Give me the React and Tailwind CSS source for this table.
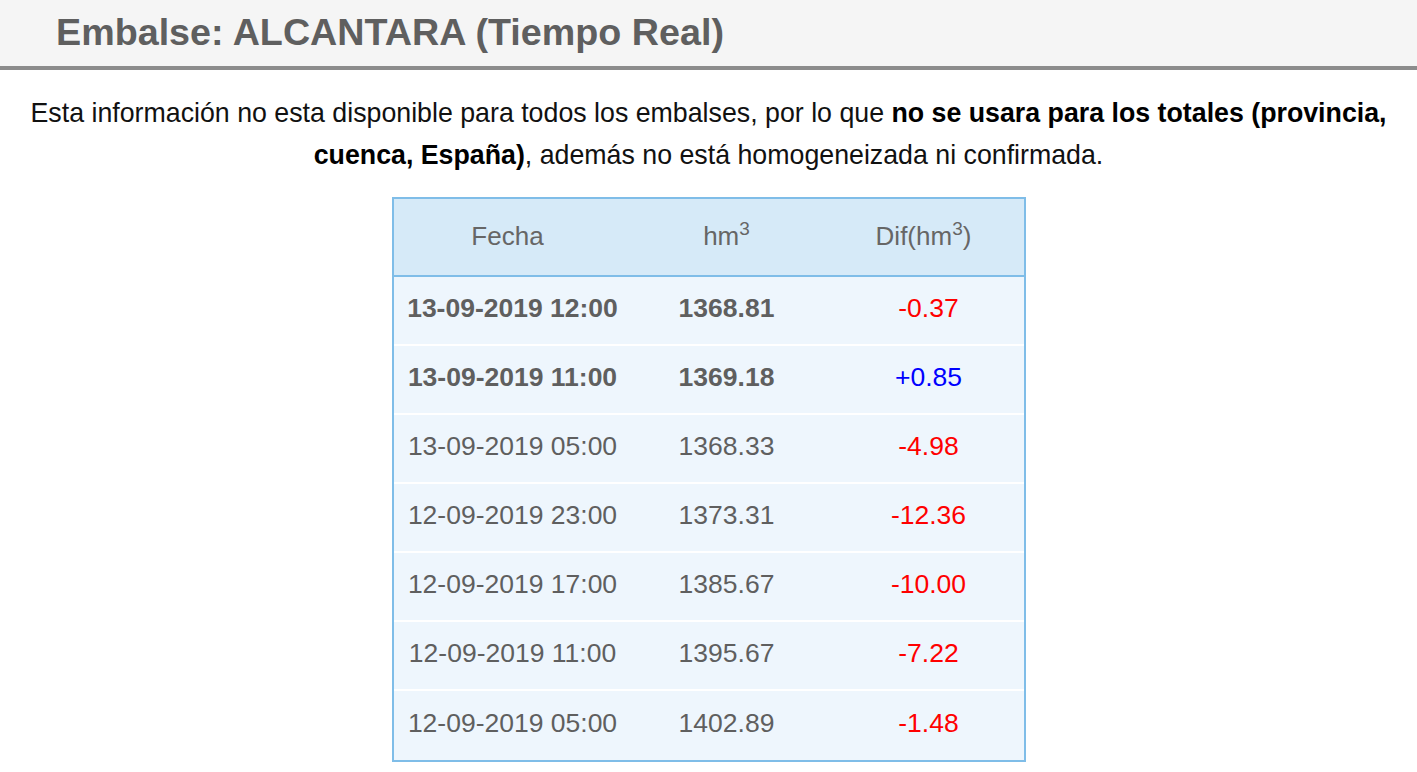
import React from "react";

const rows = [
  { f: "13-09-2019 12:00", v: "1368.81", d: "-0.37", bold: true },
  { f: "13-09-2019 11:00", v: "1369.18", d: "+0.85", bold: true },
  { f: "13-09-2019 05:00", v: "1368.33", d: "-4.98" },
  { f: "12-09-2019 23:00", v: "1373.31", d: "-12.36" },
  { f: "12-09-2019 17:00", v: "1385.67", d: "-10.00" },
  { f: "12-09-2019 11:00", v: "1395.67", d: "-7.22" },
  { f: "12-09-2019 05:00", v: "1402.89", d: "-1.48" },
];

export default function App() {
  return (
    <div className="min-h-[772px] bg-white font-['Liberation_Sans',Arial,sans-serif]">
      <div className="h-[70px] bg-[#f5f5f5] border-b-4 border-[#8c8c8c] pl-[56px] flex items-center">
        <h1 className="text-[37.7px] font-bold text-[#5f5f5f] leading-none">Embalse: ALCANTARA (Tiempo Real)</h1>
      </div>
      <p className="mt-[22px] text-center text-[26.75px] leading-[42px] text-[#111] px-[16px]">
        Esta información no esta disponible para todos los embalses, por lo que{" "}
        <b className="text-black">no se usara para los totales (provincia, cuenca, España)</b>, además no está homogeneizada ni confirmada.
      </p>
      <div className="flex justify-center mt-[21px]">
        <div className="w-[634px] border-2 border-[#7fbde8] bg-[#eef6fd]">
          <div className="grid grid-cols-[236px_194px_200px] h-[78px] items-center bg-[#d6eaf8] border-b-2 border-[#7fbde8] text-[26px] text-[#666] text-center">
            <div className="-mt-[2px] pr-[8px]">Fecha</div>
            <div className="-mt-[2px]">hm<sup className="text-[19px]">3</sup></div>
            <div className="-mt-[2px]">Dif(hm<sup className="text-[19px]">3</sup>)</div>
          </div>
          {rows.map((r, i) => (
            <div
              key={i}
              className={`grid grid-cols-[236px_194px_200px] h-[69px] items-center text-center text-[26.5px] ${i < rows.length - 1 ? "border-b-2 border-white" : ""}`}
            >
              <div className={`-mt-[3px] pl-[2px] text-[#5f5f5f] ${r.bold ? "font-bold" : ""}`}>{r.f}</div>
              <div className={`-mt-[3px] text-[#5f5f5f] ${r.bold ? "font-bold" : ""}`}>{r.v}</div>
              <div className={`-mt-[3px] pl-[10px] ${r.d.startsWith("+") ? "text-[#0000ff]" : "text-[#ff0000]"}`}>{r.d}</div>
            </div>
          ))}
        </div>
      </div>
    </div>
  );
}
